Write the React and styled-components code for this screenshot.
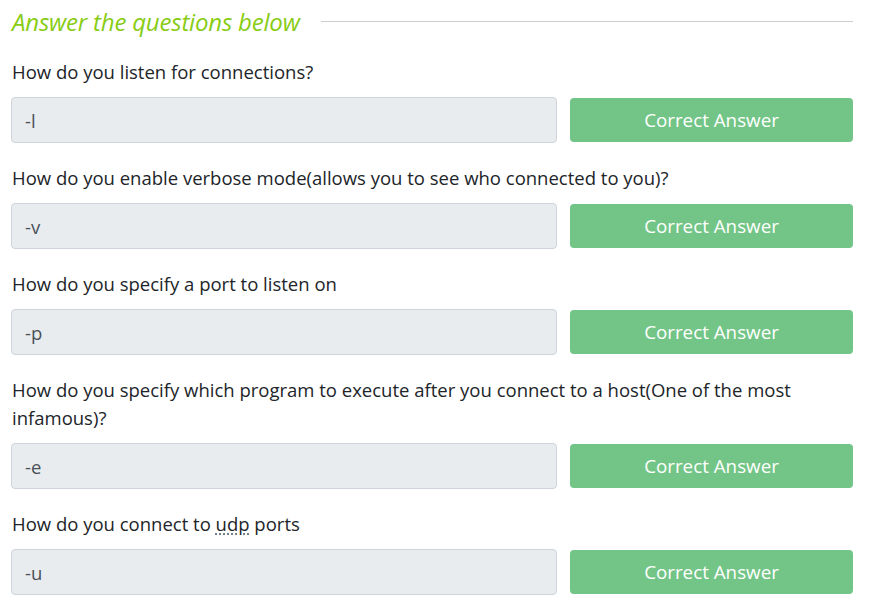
import styled, { createGlobalStyle } from "styled-components";

const Global = createGlobalStyle`
    * { box-sizing: border-box; }
    body {
        margin: 0;
        background: #fff;
        font-family: "Open Sans", "Noto Sans", sans-serif;
    }
`

const Page = styled.section`
    width: 876px;
    padding: 8px 23px 0 11px;
    display: flex;
    flex-direction: column;
`

const Header = styled.div`
    display: flex;
    align-items: center;
    gap: 21px;
    height: 26px;
    margin-bottom: 24px;

    & h2 {
        margin: 0;
        padding-left: 1px;
        font-size: 24px;
        font-weight: 400;
        font-style: italic;
        color: #88cc14;
        white-space: nowrap;
        letter-spacing: -0.2px;
    }

    & span {
        flex: 1;
        height: 1px;
        background: #cccccc;
    }
`

const Question = styled.div`
    display: flex;
    flex-direction: column;
    margin-bottom: 21px;
`

const Label = styled.p`
    margin: 0 0 11px 1px;
    font-size: 18.5px;
    line-height: 28px;
    color: #212529;
    padding-right: 40px;

    & abbr {
        text-decoration: underline dotted;
        text-underline-offset: 3px;
        text-decoration-color: #6c757d;
    }
`

const Row = styled.div`
    display: flex;
    gap: 13px;
    height: 46px;
`

const Field = styled.div`
    flex: 1;
    display: flex;
    align-items: center;
    padding: 0 13px;
    background: #e9ecef;
    border: 1px solid #ced4da;
    border-radius: 4px;
    font-size: 18.5px;
    color: #495057;
`

const Button = styled.button`
    width: 283px;
    margin: 1px 0;
    border: none;
    border-radius: 4px;
    background: #72c586;
    color: #fff;
    font-family: inherit;
    font-size: 18.8px;
`

const questions = [
    { q: "How do you listen for connections?", a: "-l" },
    { q: "How do you enable verbose mode(allows you to see who connected to you)?", a: "-v" },
    { q: "How do you specify a port to listen on", a: "-p" },
    { q: "How do you specify which program to execute after you connect to a host(One of the most infamous)?", a: "-e" },
    { q: <>How do you connect to <abbr>udp</abbr> ports</>, a: "-u" },
]

export default function App () {
    return (
        <>
            <Global />
            <Page>
                <Header>
                    <h2>Answer the questions below</h2>
                    <span />
                </Header>
                {questions.map((item, i) => (
                    <Question key={i}>
                        <Label>{item.q}</Label>
                        <Row>
                            <Field>{item.a}</Field>
                            <Button>Correct Answer</Button>
                        </Row>
                    </Question>
                ))}
            </Page>
        </>
    )
}
